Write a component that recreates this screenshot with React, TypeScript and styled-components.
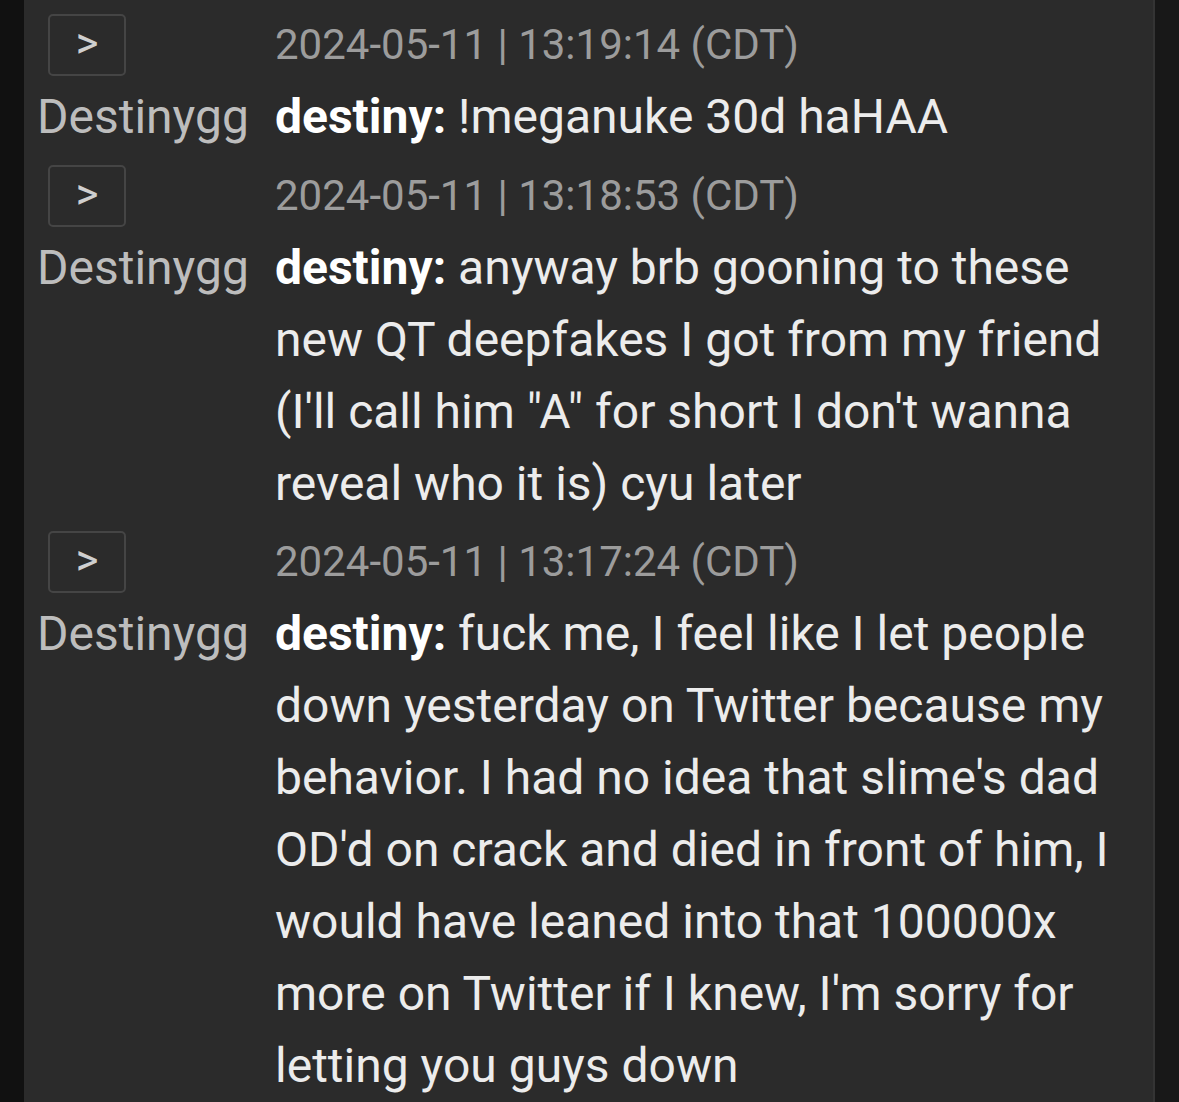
import styled, { createGlobalStyle } from "styled-components";

const GlobalStyle = createGlobalStyle`
  html, body {
    margin: 0;
    padding: 0;
    background: #111111;
    overflow: hidden;
  }
`;

type Message = {
  id: number;
  time: string;
  source: string;
  user: string;
  text: string;
};

const MESSAGES: Message[] = [
  {
    id: 1,
    time: "2024-05-11 | 13:19:14 (CDT)",
    source: "Destinygg",
    user: "destiny",
    text: "!meganuke 30d haHAA",
  },
  {
    id: 2,
    time: "2024-05-11 | 13:18:53 (CDT)",
    source: "Destinygg",
    user: "destiny",
    text: 'anyway brb gooning to these new QT deepfakes I got from my friend (I\'ll call him "A" for short I don\'t wanna reveal who it is) cyu later',
  },
  {
    id: 3,
    time: "2024-05-11 | 13:17:24 (CDT)",
    source: "Destinygg",
    user: "destiny",
    text: "fuck me, I feel like I let people down yesterday on Twitter because my behavior. I had no idea that slime's dad OD'd on crack and died in front of him, I would have leaned into that 100000x more on Twitter if I knew, I'm sorry for letting you guys down",
  },
];

export default function App() {
  return (
    <>
      <GlobalStyle />
      <Page>
        <Panel>
          {MESSAGES.map((msg) => (
            <Entry key={msg.id}>
              <ButtonCell>
                <ExpandButton>&gt;</ExpandButton>
              </ButtonCell>
              <Time>{msg.time}</Time>
              <Source>{msg.source}</Source>
              <Body>
                <User>{msg.user}:</User> {msg.text}
              </Body>
            </Entry>
          ))}
        </Panel>
        <SideStrip />
      </Page>
    </>
  );
}

const Page = styled.main`
  display: flex;
  width: 1179px;
  height: 1102px;
  padding-left: 24px;
  box-sizing: border-box;
  background: #111111;
  font-family: Roboto, "Liberation Sans", sans-serif;
`;

const Panel = styled.section`
  display: flex;
  flex-direction: column;
  gap: 6.5px;
  width: 1131px;
  padding-top: 9px;
  box-sizing: border-box;
  background: #2b2b2b;
  border-right: 2px solid #343434;
`;

const SideStrip = styled.div`
  flex: 1;
  background: #181818;
`;

const Entry = styled.article`
  display: grid;
  grid-template-columns: 251px 1fr;
  grid-auto-rows: auto;
  font-size: 48px;
  line-height: 72px;
`;

const ButtonCell = styled.div`
  display: flex;
  align-items: center;
  height: 72px;
  padding-left: 24px;
`;

const ExpandButton = styled.button`
  display: flex;
  align-items: center;
  justify-content: center;
  width: 78px;
  height: 62px;
  padding: 0 0 4px;
  border: 2px solid #454545;
  border-radius: 5px;
  background: transparent;
  color: #cfcfcf;
  font-family: Roboto, "Liberation Sans", sans-serif;
  font-size: 44px;
`;

const Time = styled.div`
  color: #9c9c9c;
  font-size: 42px;
  white-space: nowrap;
`;

const Source = styled.div`
  padding-left: 13px;
  color: #bdbdbd;
  white-space: nowrap;
`;

const Body = styled.div`
  padding-right: 36px;
  color: #ececec;
`;

const User = styled.span`
  color: #ffffff;
  font-weight: 700;
`;
